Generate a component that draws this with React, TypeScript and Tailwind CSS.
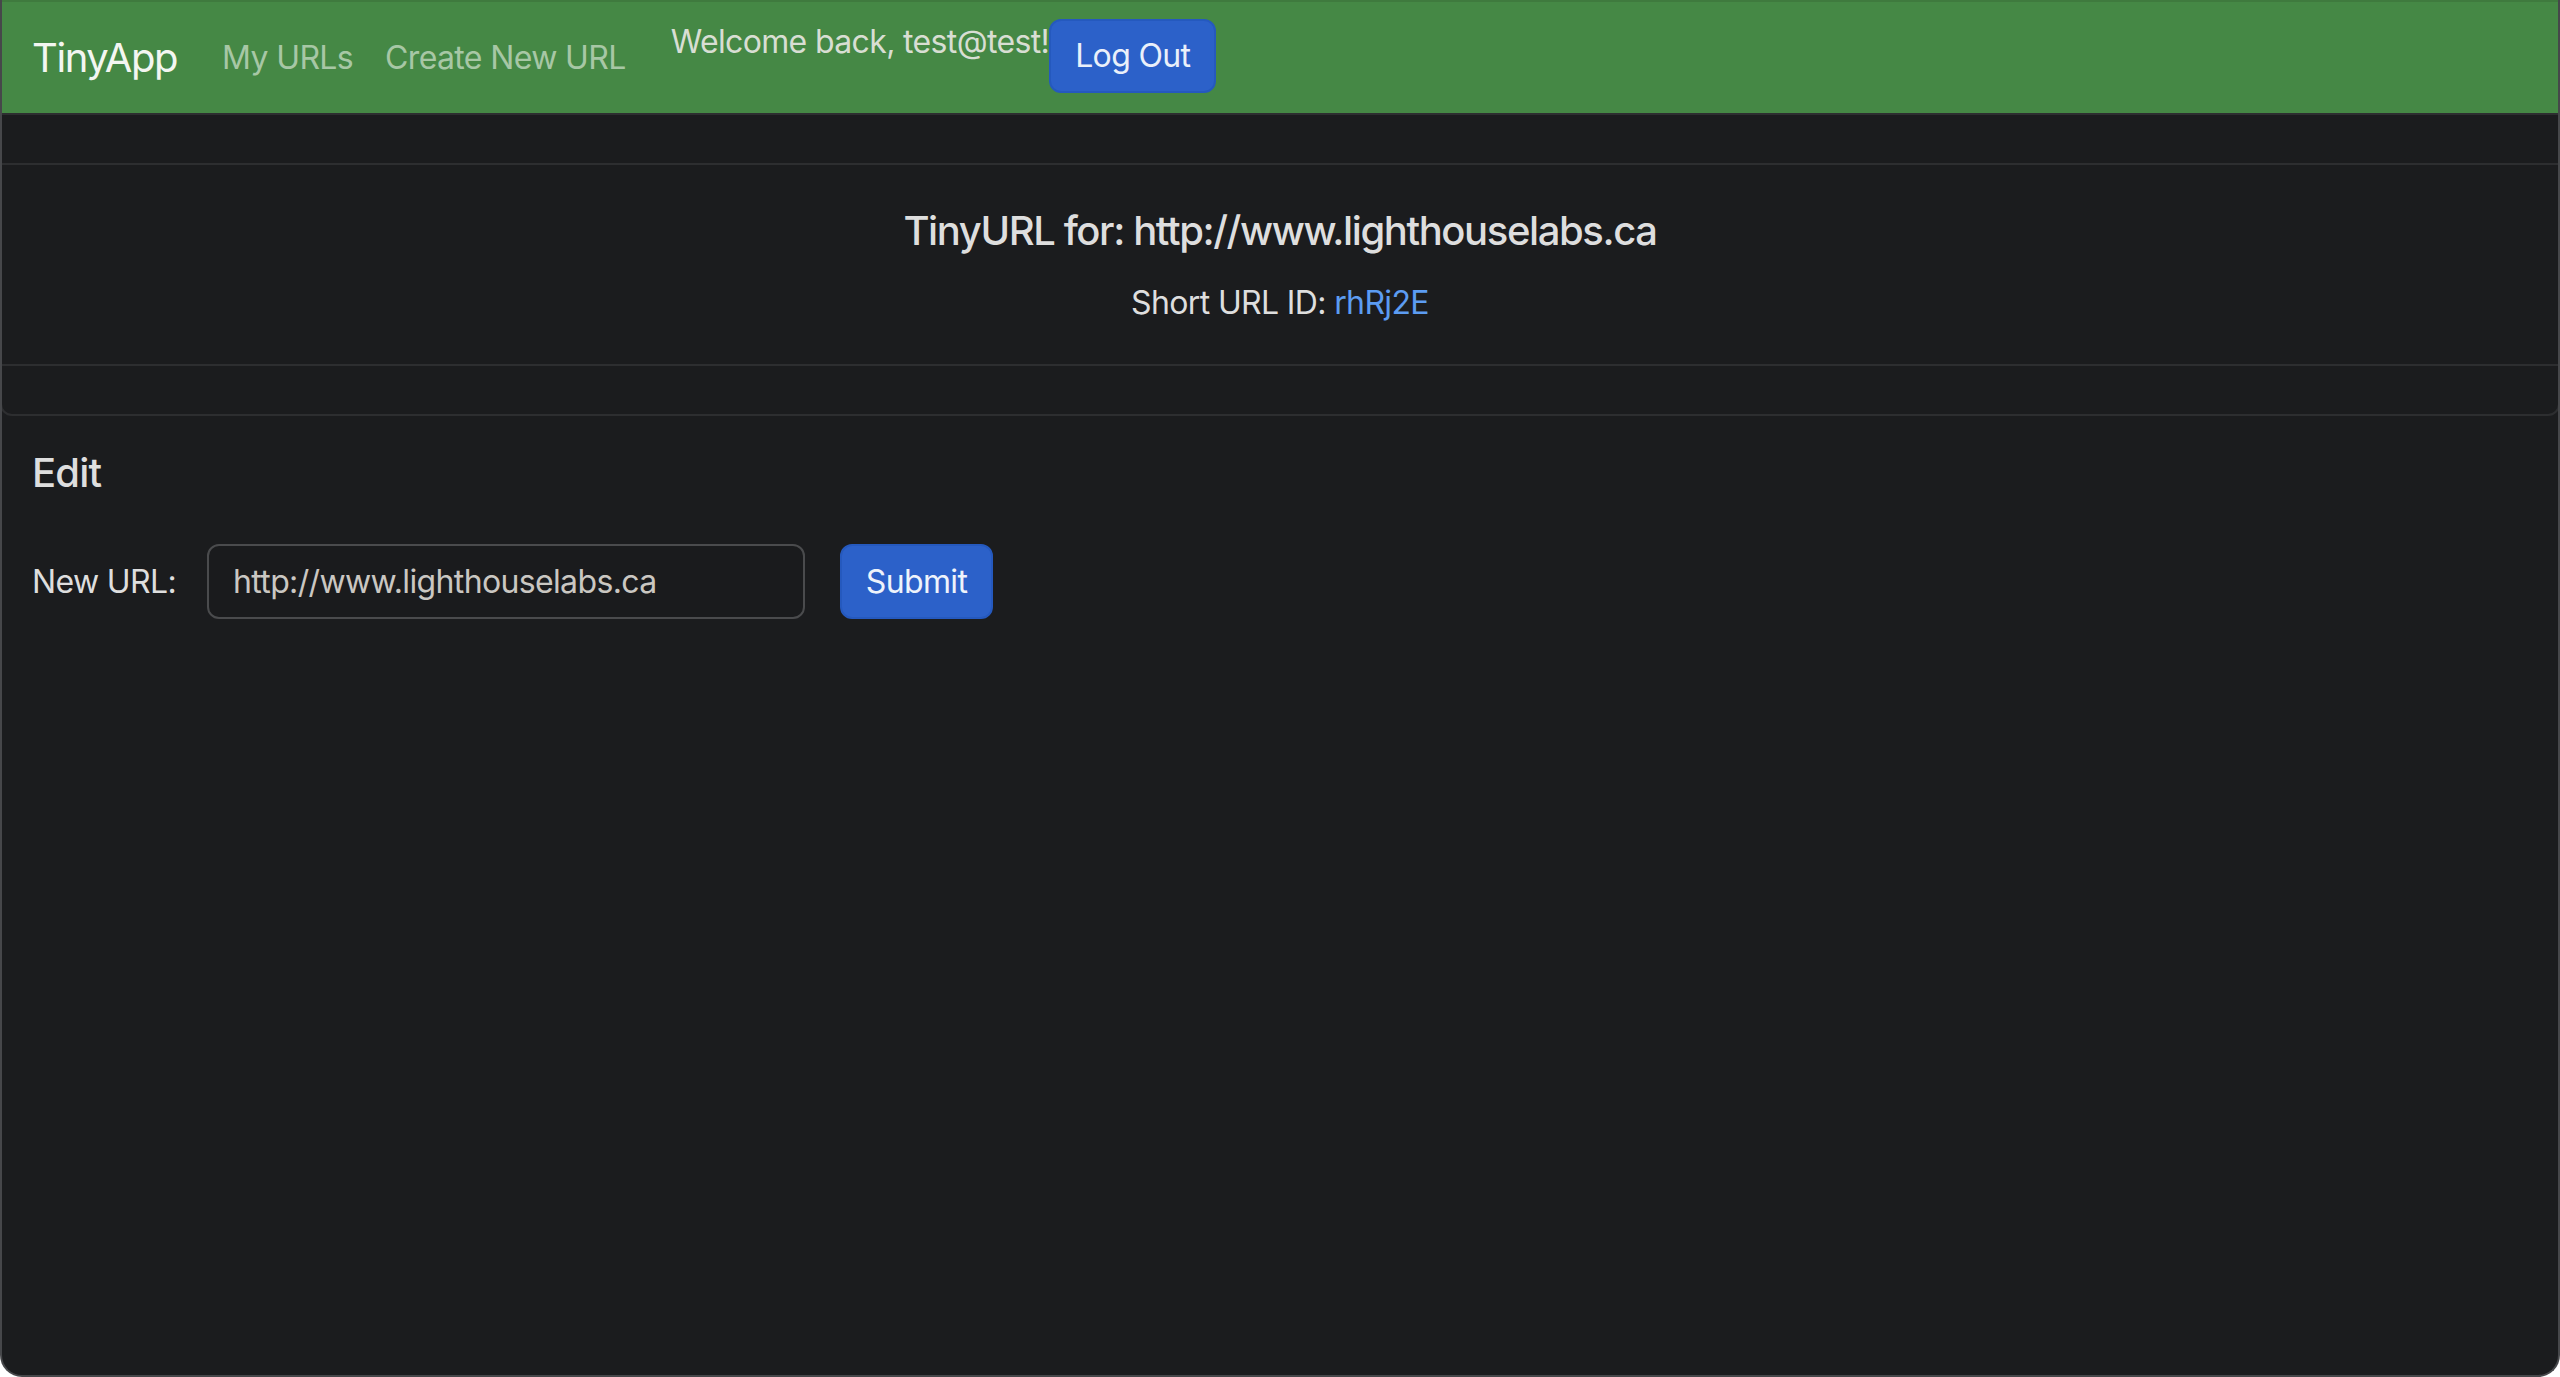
import React from 'react'

const font = { fontFamily: 'Inter, "Liberation Sans", Arial, sans-serif' }

function NavBar() {
  return (
    <nav className="h-[113px] bg-[#458845] flex items-center pl-[30px] border-t-2 border-[#3f7a3e]">
      <span className="text-[40px] leading-[48px] text-[#f3f6f1] tracking-[-0.035em] mr-[29px]">TinyApp</span>
      <a className="px-[16px] text-[32px] leading-[48px] text-[#a7c7a5] tracking-[-0.02em]">My URLs</a>
      <a className="px-[16px] text-[32px] leading-[48px] text-[#a7c7a5] tracking-[-0.02em]">Create New URL</a>
      <span className="self-start mt-[16px] ml-[29px] text-[32px] leading-[48px] text-[#d8ded3] tracking-[-0.02em]">
        Welcome back, test@test!
      </span>
      <button className="self-start mt-[17px] h-[74px] px-[24px] rounded-[12px] bg-[#2c61c9] border-2 border-[#2559be] text-[32px] leading-[48px] text-[#eaf0fa] tracking-[-0.02em]">
        Log Out
      </button>
    </nav>
  )
}

export default function App() {
  return (
    <div style={font} className="h-[1377px] bg-[#1b1c1e] border-x-2 border-b-2 border-[#46474a] rounded-b-[22px] overflow-hidden">
      <NavBar />

      {/* URL card */}
      <div className="border-2 border-[#2d2e30] rounded-b-[12px] -mx-[2px]">
        <div className="h-[50px] border-b-2 border-[#2d2e30]" />
        <div className="h-[199px] pt-[42px] flex flex-col items-center">
          <h5 className="text-[40px] leading-[48px] font-medium text-[#dedede] tracking-[-0.035em]">
            TinyURL for: http://www.lighthouselabs.ca
          </h5>
          <p className="mt-[24px] text-[32px] leading-[48px] text-[#dedede] tracking-[-0.02em]">
            Short URL ID: <a className="text-[#5c9cf2]">rhRj2E</a>
          </p>
        </div>
        <div className="h-[50px] border-t-2 border-[#2d2e30]" />
      </div>

      {/* Edit form */}
      <div className="px-[30px] pt-[33px]">
        <h3 className="text-[40px] leading-[48px] font-medium text-[#dedede] tracking-[-0.02em]">Edit</h3>
        <form className="mt-[47px] flex items-center">
          <label className="text-[32px] leading-[48px] text-[#dedede] tracking-[-0.02em] mr-[31px]">New URL:</label>
          <input
            defaultValue="http://www.lighthouselabs.ca"
            className="w-[598px] h-[75px] px-[24px] border-2 border-[#4a4b4d] rounded-[12px] bg-[#1a1b1d] text-[32px] text-[#cac7c2] tracking-[-0.02em] outline-none"
          />
          <button
            type="button"
            className="ml-[35px] w-[153px] h-[75px] rounded-[12px] bg-[#2c61c9] border-2 border-[#2559be] text-[32px] text-[#eef3fb] tracking-[-0.02em]"
          >
            Submit
          </button>
        </form>
      </div>
    </div>
  )
}
